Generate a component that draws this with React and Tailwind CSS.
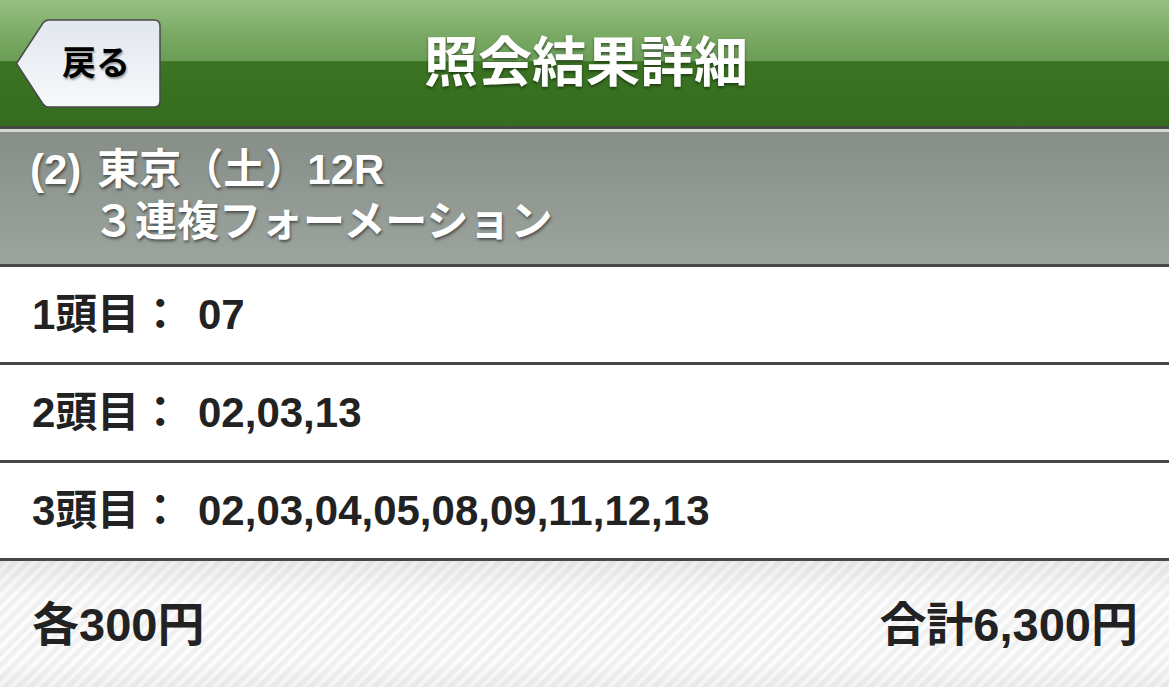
import React from "react";

function BackButton() {
  return (
    <div className="relative w-[146px] h-[89px] flex items-center justify-center pl-[16px]">
      <svg className="absolute inset-0" width="146" height="89" viewBox="0 0 146 89">
        <defs>
          <linearGradient id="bb" x1="0" y1="0" x2="0" y2="1">
            <stop offset="0" stopColor="#e2e7ee" />
            <stop offset="1" stopColor="#f7f9fb" />
          </linearGradient>
        </defs>
        <path
          d="M1.5 44.5 L28 4 Q30 1 34 1 H139 Q145 1 145 7 V82 Q145 88 139 88 H34 Q30 88 28 85 Z"
          fill="url(#bb)"
          stroke="#4a4a4a"
          strokeWidth="1.5"
        />
      </svg>
      <span className="relative text-[34px] leading-none text-black [text-shadow:1px_2px_2px_rgba(0,0,0,0.35)]">
        戻る
      </span>
    </div>
  );
}

function Row({ label, value }) {
  return (
    <div className="h-[98px] flex items-center pl-[32px] border-b-[3px] border-[#474747] bg-white text-[#222] text-[42px] leading-none">
      <span className="w-[166px] shrink-0">{label}</span>
      <span>{value}</span>
    </div>
  );
}

export default function App() {
  return (
    <div className="w-[1169px] h-[687px] overflow-hidden flex flex-col font-bold font-['Liberation_Sans','Noto_Sans_CJK_JP',sans-serif]">
      <div className="h-[129px] shrink-0 border-b-[3px] border-[#474747] grid grid-cols-[1fr_auto_1fr] items-center pl-[15px] bg-[image:linear-gradient(to_bottom,#96c083_0%,#78a862_30%,#6b9e56_48%,#3b7423_49%,#356c1f_100%)]">
        <div className="flex items-center">
          <BackButton />
        </div>
        <div className="text-white text-[54px] leading-none pr-[12px] [text-shadow:0_2px_3px_rgba(0,0,0,0.45)]">
          照会結果詳細
        </div>
        <div />
      </div>
      <div className="h-[3px] shrink-0 bg-[#d3d9d3]" />
      <div className="h-[135px] shrink-0 border-b-[3px] border-[#474747] pl-[30px] pt-[16px] text-white bg-[image:linear-gradient(to_bottom,#878e88,#9ca49e)] [text-shadow:1px_2px_3px_rgba(0,0,0,0.5)]">
        <div className="h-[44px] flex items-center text-[42px] leading-none">
          <span>(2)</span>
          <span className="ml-[16px]">東京（土）12R</span>
        </div>
        <div className="h-[48px] mt-[6px] flex items-center pl-[63px] text-[42px] leading-none">３連複フォーメーション</div>
      </div>
      <Row label="1頭目：" value="07" />
      <Row label="2頭目：" value="02,03,13" />
      <Row label="3頭目：" value="02,03,04,05,08,09,11,12,13" />
      <div className="flex-1 flex items-center justify-between pl-[32px] pr-[31px] text-[#222] text-[47px] leading-none bg-[image:linear-gradient(to_bottom,rgba(0,0,0,0.06),rgba(0,0,0,0)_30%,rgba(0,0,0,0)_80%,rgba(0,0,0,0.04)),repeating-linear-gradient(135deg,#f1f1f1_0px,#f1f1f1_5px,#fcfcfc_5px,#fcfcfc_9px)]">
        <span>各300円</span>
        <span>合計6,300円</span>
      </div>
    </div>
  );
}
